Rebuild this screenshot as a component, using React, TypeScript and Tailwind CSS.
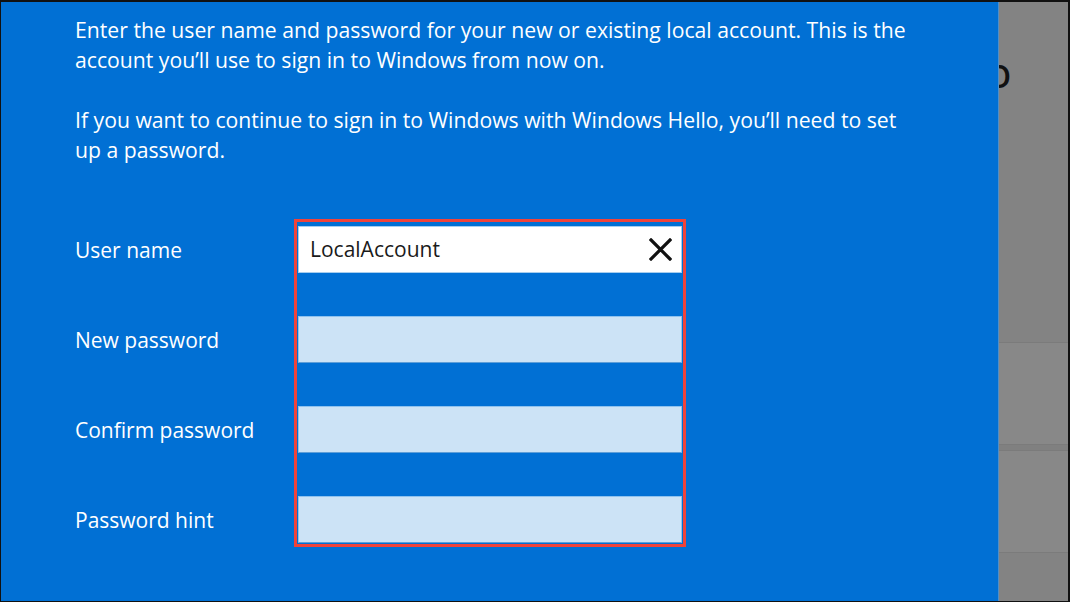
const fields = [
  { label: "User name", value: "LocalAccount", active: true },
  { label: "New password", value: "", active: false },
  { label: "Confirm password", value: "", active: false },
  { label: "Password hint", value: "", active: false },
];

const ClearIcon = () => (
  <svg width="23" height="23" viewBox="0 0 23 23" className="shrink-0">
    <path d="M2 2 21 21M21 2 2 21" stroke="#111" strokeWidth="3.2" strokeLinecap="square" fill="none" />
  </svg>
);

export default function App() {
  return (
    <div
      className="flex w-[1070px] h-[602px] bg-[#111] pt-[2px] pl-[1px] pb-[1px] pr-[2px] overflow-hidden"
      style={{ fontFamily: '"Open Sans", "Noto Sans", sans-serif' }}
    >
      {/* dialog */}
      <div className="w-[998px] shrink-0 bg-[#0170d4] text-white border-r border-[#4f8fc8] pl-[74px] pt-[13px]">
        <div className="text-[21.2px] leading-[30px] whitespace-nowrap">
          <p>
            Enter the user name and password for your new or existing local account. This is the
            <br />
            account you’ll use to sign in to Windows from now on.
          </p>
          <p className="mt-[30px]">
            If you want to continue to sign in to Windows with Windows Hello, you’ll need to set
            <br />
            up a password.
          </p>
        </div>

        <div className="flex mt-[54px]">
          <div className="w-[219px] shrink-0 flex flex-col pt-[8px] gap-[43px]">
            {fields.map((f) => (
              <div key={f.label} className="h-[47px] flex items-center text-[21px]">
                {f.label}
              </div>
            ))}
          </div>
          <div className="w-[392px] border-[3px] border-[#f0433a] px-[1px] pt-[4px] pb-[1px] flex flex-col gap-[43px]">
            {fields.map((f) =>
              f.active ? (
                <div
                  key={f.label}
                  className="h-[47px] bg-white border border-[#a6cdee] flex items-center justify-between pl-[11px] pr-[9px]"
                >
                  <span className="text-[21px] text-[#1a1a1a]">{f.value}</span>
                  <ClearIcon />
                </div>
              ) : (
                <div
                  key={f.label}
                  className="h-[47px] bg-[#cce3f6] border border-[#8fc2ee] border-b-[#5f9fd8]"
                />
              )
            )}
          </div>
        </div>
      </div>

      {/* dimmed settings page behind */}
      <div className="flex-1 bg-[#838383] flex flex-col">
        <div className="h-[61px]" />
        <div className="h-[26px] overflow-hidden">
          <div className="-ml-[13px] text-[32px] leading-[26px] font-semibold text-[#111]">O</div>
        </div>
        <div className="h-[253px]" />
        <div className="h-[102px] bg-[#888] border-t border-[#7b7b7b]" />
        <div className="h-[6px] bg-[#808080] border-t border-[#7b7b7b]" />
        <div className="h-[102px] bg-[#888] border-t border-[#7b7b7b]" />
        <div className="flex-1 border-t border-[#7b7b7b]" />
      </div>
    </div>
  );
}
